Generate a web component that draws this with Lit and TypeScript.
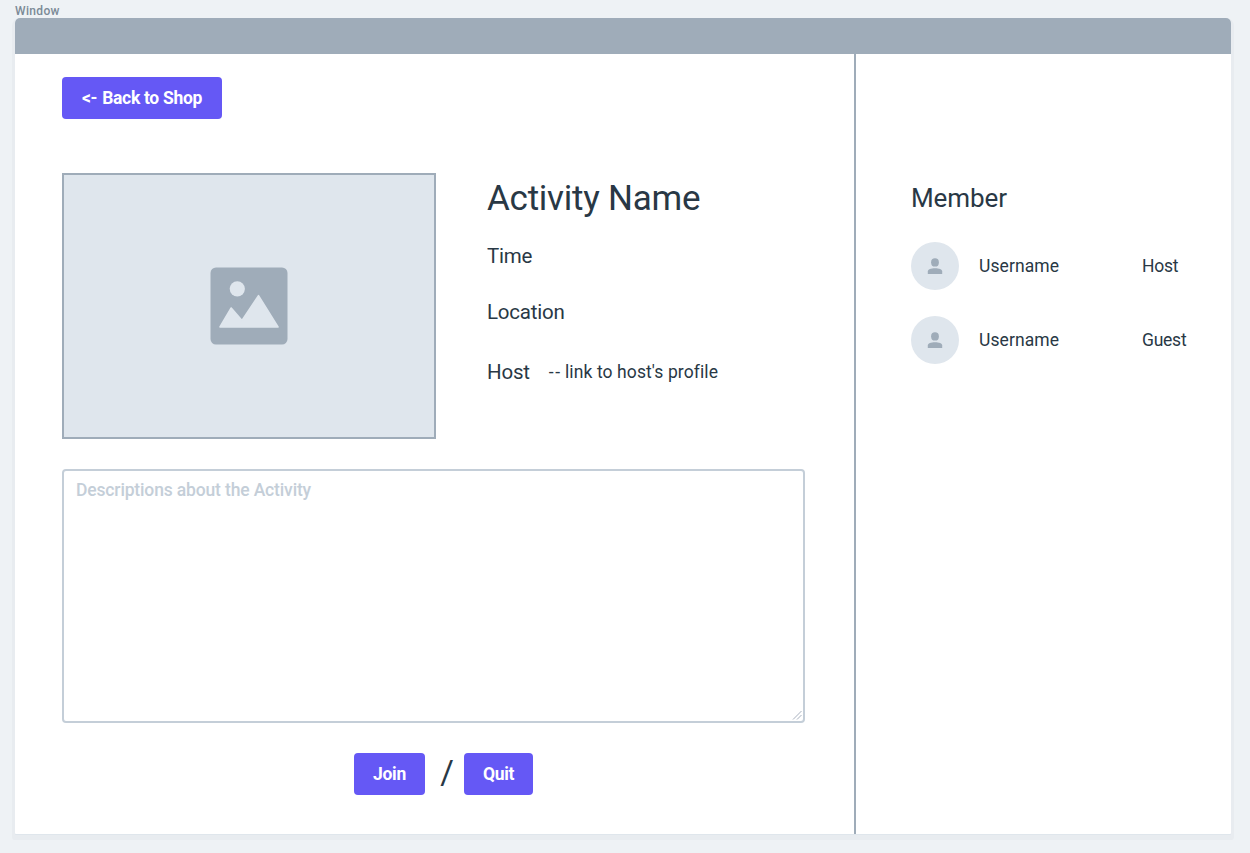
import { LitElement, html, css, svg } from "lit";
import { customElement, property } from "lit/decorators.js";

@customElement("member-row")
class MemberRow extends LitElement {
  @property() name = "";
  @property() role = "";

  static styles = css`
    :host { display: grid; grid-template-columns: 68px 163px 1fr; align-items: center; height: 48px; font-size: 17.5px; }
    .avatar { width: 48px; height: 48px; border-radius: 50%; background: #dfe6ed; }
    .avatar svg { display: block; }
    .name { letter-spacing: 0.1px; }
    .role { letter-spacing: -0.25px; }
  `;

  render() {
    return html`
      <div class="avatar">
        <svg width="48" height="48" viewBox="0 0 48 48" fill="#9facb9">
          <ellipse cx="24" cy="20.4" rx="3.9" ry="4.2" />
          <path d="M16.8 32V29.4C16.8 27.2 20 26.2 24 26.2S31.2 27.2 31.2 29.4V32Z" />
        </svg>
      </div>
      <span class="name">${this.name}</span>
      <span class="role">${this.role}</span>
    `;
  }
}

const picture = svg`
  <rect x="0.5" y="0.5" width="77" height="77" rx="5.5" fill="#9facb9" />
  <circle cx="27.3" cy="21.8" r="7.6" fill="#dfe6ed" />
  <path d="M10 60L21.2 41L32 53.5L48.5 28.7L68 60Z" fill="#dfe6ed" stroke="#dfe6ed" stroke-width="1.6" stroke-linejoin="round" />
`;

@customElement("app-root")
class AppRoot extends LitElement {
  static styles = css`
    :host {
      display: block; box-sizing: border-box; width: 1250px; height: 853px; padding: 3px 19px 0 15px;
      overflow: hidden; background: #eef2f5; color: #293845;
      font: 18px/24px Roboto, "Liberation Sans", sans-serif;
    }
    .label { height: 15px; font-size: 12px; line-height: 16px; font-weight: 500; letter-spacing: 0.35px; color: #7b8a97; }
    .window {
      display: flex; flex-direction: column; height: 816px; background: #fff;
      border-radius: 5px 5px 1px 1px; box-shadow: 0 1px 0 #dfe6ec, 0 3px 0 3px #e8ecf0;
    }
    .bar { height: 36px; background: #9facb9; border-radius: 5px 5px 0 0; }
    .body { display: flex; flex: 1; }
    .main { box-sizing: border-box; width: 839px; padding: 23px 49px 0 47px; }
    .side { flex: 1; border-left: 2px solid #9facb9; padding: 128px 0 0 55px; }
    .btn {
      display: inline-flex; align-items: center; justify-content: center; box-sizing: border-box;
      height: 42px; border: 0; padding: 0; border-radius: 4px; background: #6558f5; color: #fff;
      font: 700 17.5px/24px Roboto, sans-serif; white-space: nowrap;
    }
    .back { width: 160px; gap: 5px; letter-spacing: -0.3px; }
    .join { width: 71px; letter-spacing: -0.3px; }
    .quit { width: 69px; letter-spacing: -0.4px; }
    .info { display: flex; gap: 51px; margin-top: 54px; }
    .thumb {
      display: flex; align-items: center; justify-content: center; box-sizing: border-box;
      width: 374px; height: 266px; border: 2px solid #9facb9; background: #dfe6ed;
    }
    .details { display: flex; flex-direction: column; }
    h1, h2 { margin: 0; font-weight: 400; white-space: nowrap; }
    h1 { font-size: 35px; line-height: 51px; letter-spacing: -0.25px; }
    h2 { font-size: 26px; line-height: 32px; letter-spacing: -0.1px; }
    .field { display: flex; align-items: center; height: 24px; font-size: 20.5px; letter-spacing: -0.2px; }
    .time { margin-top: 20px; }
    .place { margin-top: 32px; }
    .host { margin-top: 36px; }
    .link { display: flex; gap: 5px; margin-left: 19px; font-size: 17.5px; letter-spacing: 0.1px; }
    .dashes { letter-spacing: 1.5px; margin-right: -1.5px; }
    .desc {
      position: relative; box-sizing: border-box; width: 743px; height: 254px; margin-top: 30px;
      padding: 7px 12px; border: 2px solid #c4ced8; border-radius: 4px; color: #c4ced8;
      font-weight: 500; font-size: 17.5px; letter-spacing: -0.15px;
    }
    .grip { position: absolute; right: 0; bottom: 0; }
    .actions { display: flex; align-items: center; margin: 30px 0 0 292px; }
    .slash { width: 39px; height: 42px; }
    .slash span { display: block; text-align: center; font-size: 33px; line-height: 39px; padding-left: 5px; }
    .people { display: flex; flex-direction: column; gap: 26px; margin-top: 28px; }
  `;

  render() {
    return html`
      <div class="label"><span>Window</span></div>
      <div class="window">
        <div class="bar"></div>
        <div class="body">
          <div class="main">
            <button class="btn back"><span>&lt;-</span><span>Back to Shop</span></button>
            <div class="info">
              <div class="thumb"><svg width="78" height="78" viewBox="0 0 78 78">${picture}</svg></div>
              <div class="details">
                <h1>Activity Name</h1>
                <div class="field time">Time</div>
                <div class="field place">Location</div>
                <div class="field host">Host<span class="link"><span class="dashes">--</span><span>link to host's profile</span></span></div>
              </div>
            </div>
            <div class="desc">
              <span>Descriptions about the Activity</span>
              <svg class="grip" width="11" height="11" viewBox="0 0 11 11" stroke="#a9b2c0" stroke-width="1">
                <path d="M1 9.5L9.5 1M5 9.5L9.5 5" />
              </svg>
            </div>
            <div class="actions">
              <button class="btn join">Join</button>
              <div class="slash"><span>/</span></div>
              <button class="btn quit">Quit</button>
            </div>
          </div>
          <div class="side">
            <h2>Member</h2>
            <div class="people">
              <member-row name="Username" role="Host"></member-row>
              <member-row name="Username" role="Guest"></member-row>
            </div>
          </div>
        </div>
      </div>
    `;
  }
}
